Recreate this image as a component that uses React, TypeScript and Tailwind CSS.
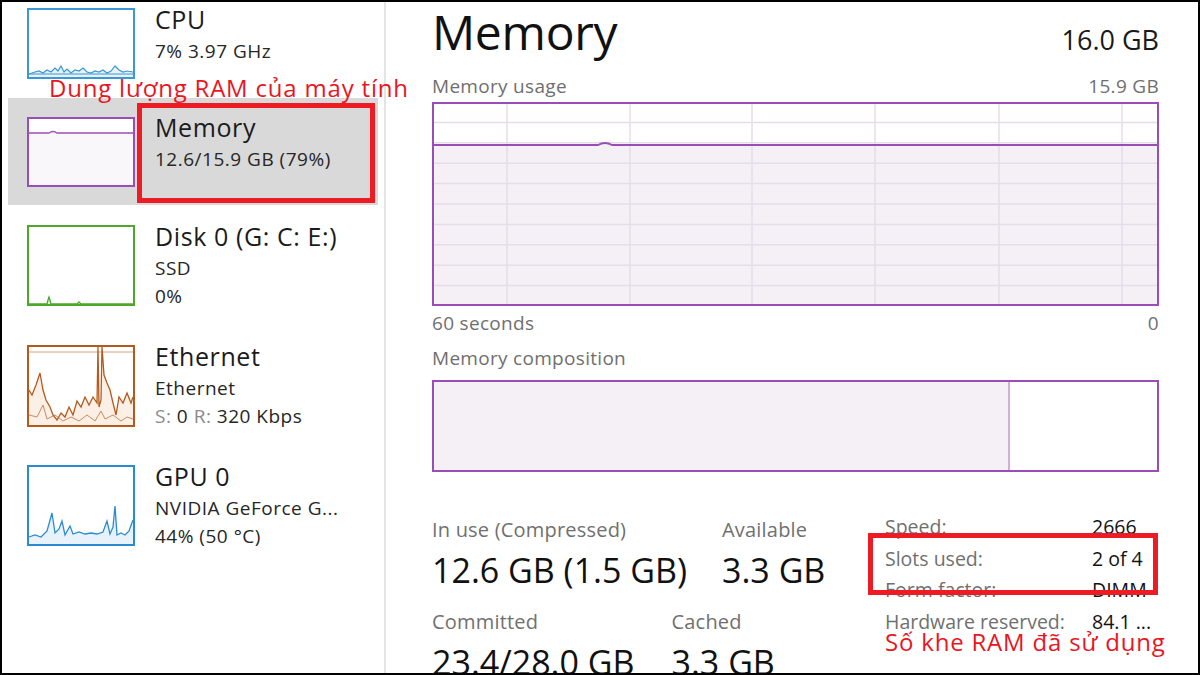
import type { ReactNode } from 'react';

const font = "font-['Open_Sans','Noto_Sans',sans-serif]";

function Thumb({ color, h, children }: { color: string; h: number; children?: ReactNode }) {
  return (
    <svg width={108} height={h} className="block shrink-0">
      <rect x={1} y={1} width={106} height={h - 2} fill="white" />
      {children}
      <rect x={1} y={1} width={106} height={h - 2} fill="none" stroke={color} strokeWidth={2} />
    </svg>
  );
}

const cpuPts = '2,66 8,64 12,63 16,65 20,62 24,64 28,60 31,63 34,58 37,64 40,61 44,65 48,62 52,63 56,60 60,64 64,65 68,63 72,64 76,62 80,65 84,63 88,58 92,62 96,64 100,63 106,64';
const ethPts = '2,45 5,50 9,40 13,28 16,45 19,55 23,62 26,70 30,75 34,68 38,72 42,62 46,70 50,56 54,62 58,52 62,60 66,52 70,58 71,2 72,62 74,55 75,2 77,30 80,38 83,45 86,58 89,70 92,52 96,58 100,48 104,58 106,52';
const ethLow = '2,70 10,72 16,60 20,74 28,70 36,76 44,72 52,76 60,70 68,76 74,66 78,74 86,70 94,76 100,72 106,74';
const gpuPts = '2,72 8,70 14,72 20,66 25,48 28,68 32,64 35,56 38,70 43,61 46,69 52,67 58,69 64,68 70,69 76,67 80,56 83,69 86,62 88,41 90,70 94,68 98,70 102,66 106,55';

function LeftItem({ thumb, title, lines }: { thumb: ReactNode; title: string; lines: ReactNode[] }) {
  return (
    <div className="flex items-start px-[19px]">
      <div className="mt-[4px]">{thumb}</div>
      <div className="ml-[20px]">
        <div className="text-[25px] leading-[30px] tracking-[0.6px] text-[#1b1b1b] whitespace-nowrap">{title}</div>
        <div className="mt-[3px]">
          {lines.map((l, i) => (
            <div key={i} className="text-[19px] leading-[28px] tracking-[0.5px] text-[#262626] whitespace-nowrap">{l}</div>
          ))}
        </div>
      </div>
    </div>
  );
}

function Stat({ label, value }: { label: string; value: string }) {
  return (
    <div className="whitespace-nowrap">
      <div className="text-[20px] leading-[24px] tracking-[0.2px] text-[#707070]">{label}</div>
      <div className="mt-[8px] text-[34px] leading-[40px] text-[#111]">{value}</div>
    </div>
  );
}

const specs = [
  ['Speed:', '2666'],
  ['Slots used:', '2 of 4'],
  ['Form factor:', 'DIMM'],
  ['Hardware reserved:', '84.1 ...'],
];

function UsageChart() {
  const vx = [75, 198, 320, 443, 567, 690];
  const hy = [20.4, 40.8, 61.2, 81.6, 102, 122.4, 142.8, 163.2, 183.6];
  return (
    <svg width={727} height={204} className="block">
      <rect x={0} y={0} width={727} height={204} fill="white" />
      <path d="M1,43 L166,43 Q173,39 180,43 L726,43 L726,203 L1,203 Z" fill="#f4f0f6" />
      {hy.map((y) => (
        <line key={y} x1={1} x2={726} y1={y} y2={y} stroke="#e6dcea" strokeWidth={1.5} />
      ))}
      {vx.map((x) => (
        <line key={x} x1={x} x2={x} y1={1} y2={203} stroke="#e6dcea" strokeWidth={1.5} />
      ))}
      <path d="M1,43 L166,43 Q173,39 180,43 L726,43" fill="none" stroke="#9a4db7" strokeWidth={2} />
      <rect x={1} y={1} width={725} height={202} fill="none" stroke="#9a4db7" strokeWidth={2} />
    </svg>
  );
}

export default function App() {
  return (
    <div className={`${font} relative flex w-[1200px] h-[675px] overflow-hidden bg-white border-2 border-black`}>
      {/* Left list */}
      <aside className="w-[384px] shrink-0 border-r-2 border-[#e4e4e4] pt-[2px]">
        <div className="mx-[6px]">
          <LeftItem
            title="CPU"
            lines={['7% 3.97 GHz']}
            thumb={
              <Thumb color="#3b98d4" h={71}>
                <polygon points={`2,69 ${cpuPts} 106,69`} fill="#e6f1fa" />
                <polyline points={cpuPts} fill="none" stroke="#3b98d4" strokeWidth={1.2} />
                <line x1={2} x2={106} y1={66} y2={66} stroke="#3b98d4" strokeWidth={1} />
              </Thumb>
            }
          />
        </div>

        <div className="mx-[6px] mt-[19px] bg-[#d9d9d9] pt-[14px] pb-[18px]">
          <LeftItem
            title="Memory"
            lines={['12.6/15.9 GB (79%)']}
            thumb={
              <div className="mt-[1px]">
                <Thumb color="#9a4db7" h={70}>
                  <path d="M2,16 L22,16 Q26,13 30,16 L106,16 L106,68 L2,68 Z" fill="#faf7fb" />
                  <path d="M2,16 L22,16 Q26,13 30,16 L106,16" fill="none" stroke="#9a4db7" strokeWidth={1.5} />
                </Thumb>
              </div>
            }
          />
        </div>

        <div className="mx-[6px] mt-[16px]">
          <LeftItem
            title="Disk 0 (G: C: E:)"
            lines={['SSD', '0%']}
            thumb={
              <Thumb color="#4ea62a" h={81}>
                <polyline points="2,79 20,79 21,75 22,72 23,75 24,79 50,79 52,77 54,79 106,79" fill="#e8f4e2" stroke="#4ea62a" strokeWidth={1.3} />
              </Thumb>
            }
          />
        </div>

        <div className="mx-[6px] mt-[31px]">
          <LeftItem
            title="Ethernet"
            lines={[
              'Ethernet',
              <span key="s">
                <span className="text-[#8a8a8a]">S:</span> 0 <span className="text-[#8a8a8a]">R:</span> 320 Kbps
              </span>,
            ]}
            thumb={
              <Thumb color="#b45a1c" h={82}>
                <polygon points={`2,80 ${ethPts} 106,80`} fill="#fbefe6" />
                <line x1={2} x2={106} y1={7} y2={7} stroke="#d9a07a" strokeWidth={1.2} />
                <polyline points={ethLow} fill="none" stroke="#c98a5e" strokeWidth={1} />
                <polyline points={ethPts} fill="none" stroke="#b45a1c" strokeWidth={1.3} />
              </Thumb>
            }
          />
        </div>

        <div className="mx-[6px] mt-[31px]">
          <LeftItem
            title="GPU 0"
            lines={['NVIDIA GeForce G...', '44% (50 °C)']}
            thumb={
              <Thumb color="#2a8ccf" h={81}>
                <polygon points={`2,79 ${gpuPts} 106,79`} fill="#e7f2fa" />
                <polyline points={gpuPts} fill="none" stroke="#2a8ccf" strokeWidth={1.3} />
              </Thumb>
            }
          />
        </div>
      </aside>

      {/* Detail panel */}
      <main className="flex-1 pl-[46px] pr-[39px]">
        <div className="flex items-baseline justify-between">
          <h1 className="text-[48px] leading-[60px] tracking-[-0.3px] text-[#111]">Memory</h1>
          <span className="text-[27px] text-[#1a1a1a]">16.0 GB</span>
        </div>

        <div className="mt-[13px] flex justify-between text-[19px] leading-[22px] tracking-[0.3px] text-[#6f6f6f]">
          <span>Memory usage</span>
          <span>15.9 GB</span>
        </div>
        <div className="mt-[5px]">
          <UsageChart />
        </div>
        <div className="mt-[6px] flex justify-between text-[19px] leading-[22px] tracking-[0.3px] text-[#6f6f6f]">
          <span>60 seconds</span>
          <span>0</span>
        </div>

        <div className="mt-[13px] text-[19px] leading-[22px] tracking-[0.3px] text-[#6f6f6f]">Memory composition</div>
        <div className="mt-[11px] flex h-[92px] border-2 border-[#9a4db7]">
          <div className="w-[576px] bg-[#f4f0f6] border-r-2 border-[#cfb0dc]" />
          <div className="flex-1 bg-white" />
        </div>

        <div className="mt-[38px] flex items-start">
          <div className="w-[453px] shrink-0 pt-[8px]">
            <div className="flex gap-[35px]">
              <Stat label="In use (Compressed)" value="12.6 GB (1.5 GB)" />
              <Stat label="Available" value="3.3 GB" />
            </div>
            <div className="mt-[20px] flex gap-[37px]">
              <Stat label="Committed" value="23.4/28.0 GB" />
              <Stat label="Cached" value="3.3 GB" />
            </div>
          </div>
          <div className="mt-[1px] grid grid-cols-[207px_1fr] text-[19.5px] leading-[31.5px] whitespace-nowrap">
            {specs.map(([k, v]) => (
              <div key={k} className="contents">
                <span className="text-[#707070]">{k}</span>
                <span className="text-[#111]">{v}</span>
              </div>
            ))}
          </div>
        </div>
      </main>

      {/* Annotations */}
      <div className="absolute left-[135px] top-[101px] w-[238px] h-[100px] border-[5px] border-[#ec1b24]" />
      <div className="absolute left-[47px] top-[74px] text-[24px] leading-none tracking-[0.8px] text-[#e8161f] whitespace-nowrap">
        Dung lượng RAM của máy tính
      </div>
      <div className="absolute left-[866px] top-[531px] w-[290px] h-[62px] border-[5px] border-[#ec1b24]" />
      <div className="absolute left-[883px] top-[628px] text-[24px] leading-none tracking-[0.8px] text-[#e8161f] whitespace-nowrap">
        Số khe RAM đã sử dụng
      </div>
    </div>
  );
}
